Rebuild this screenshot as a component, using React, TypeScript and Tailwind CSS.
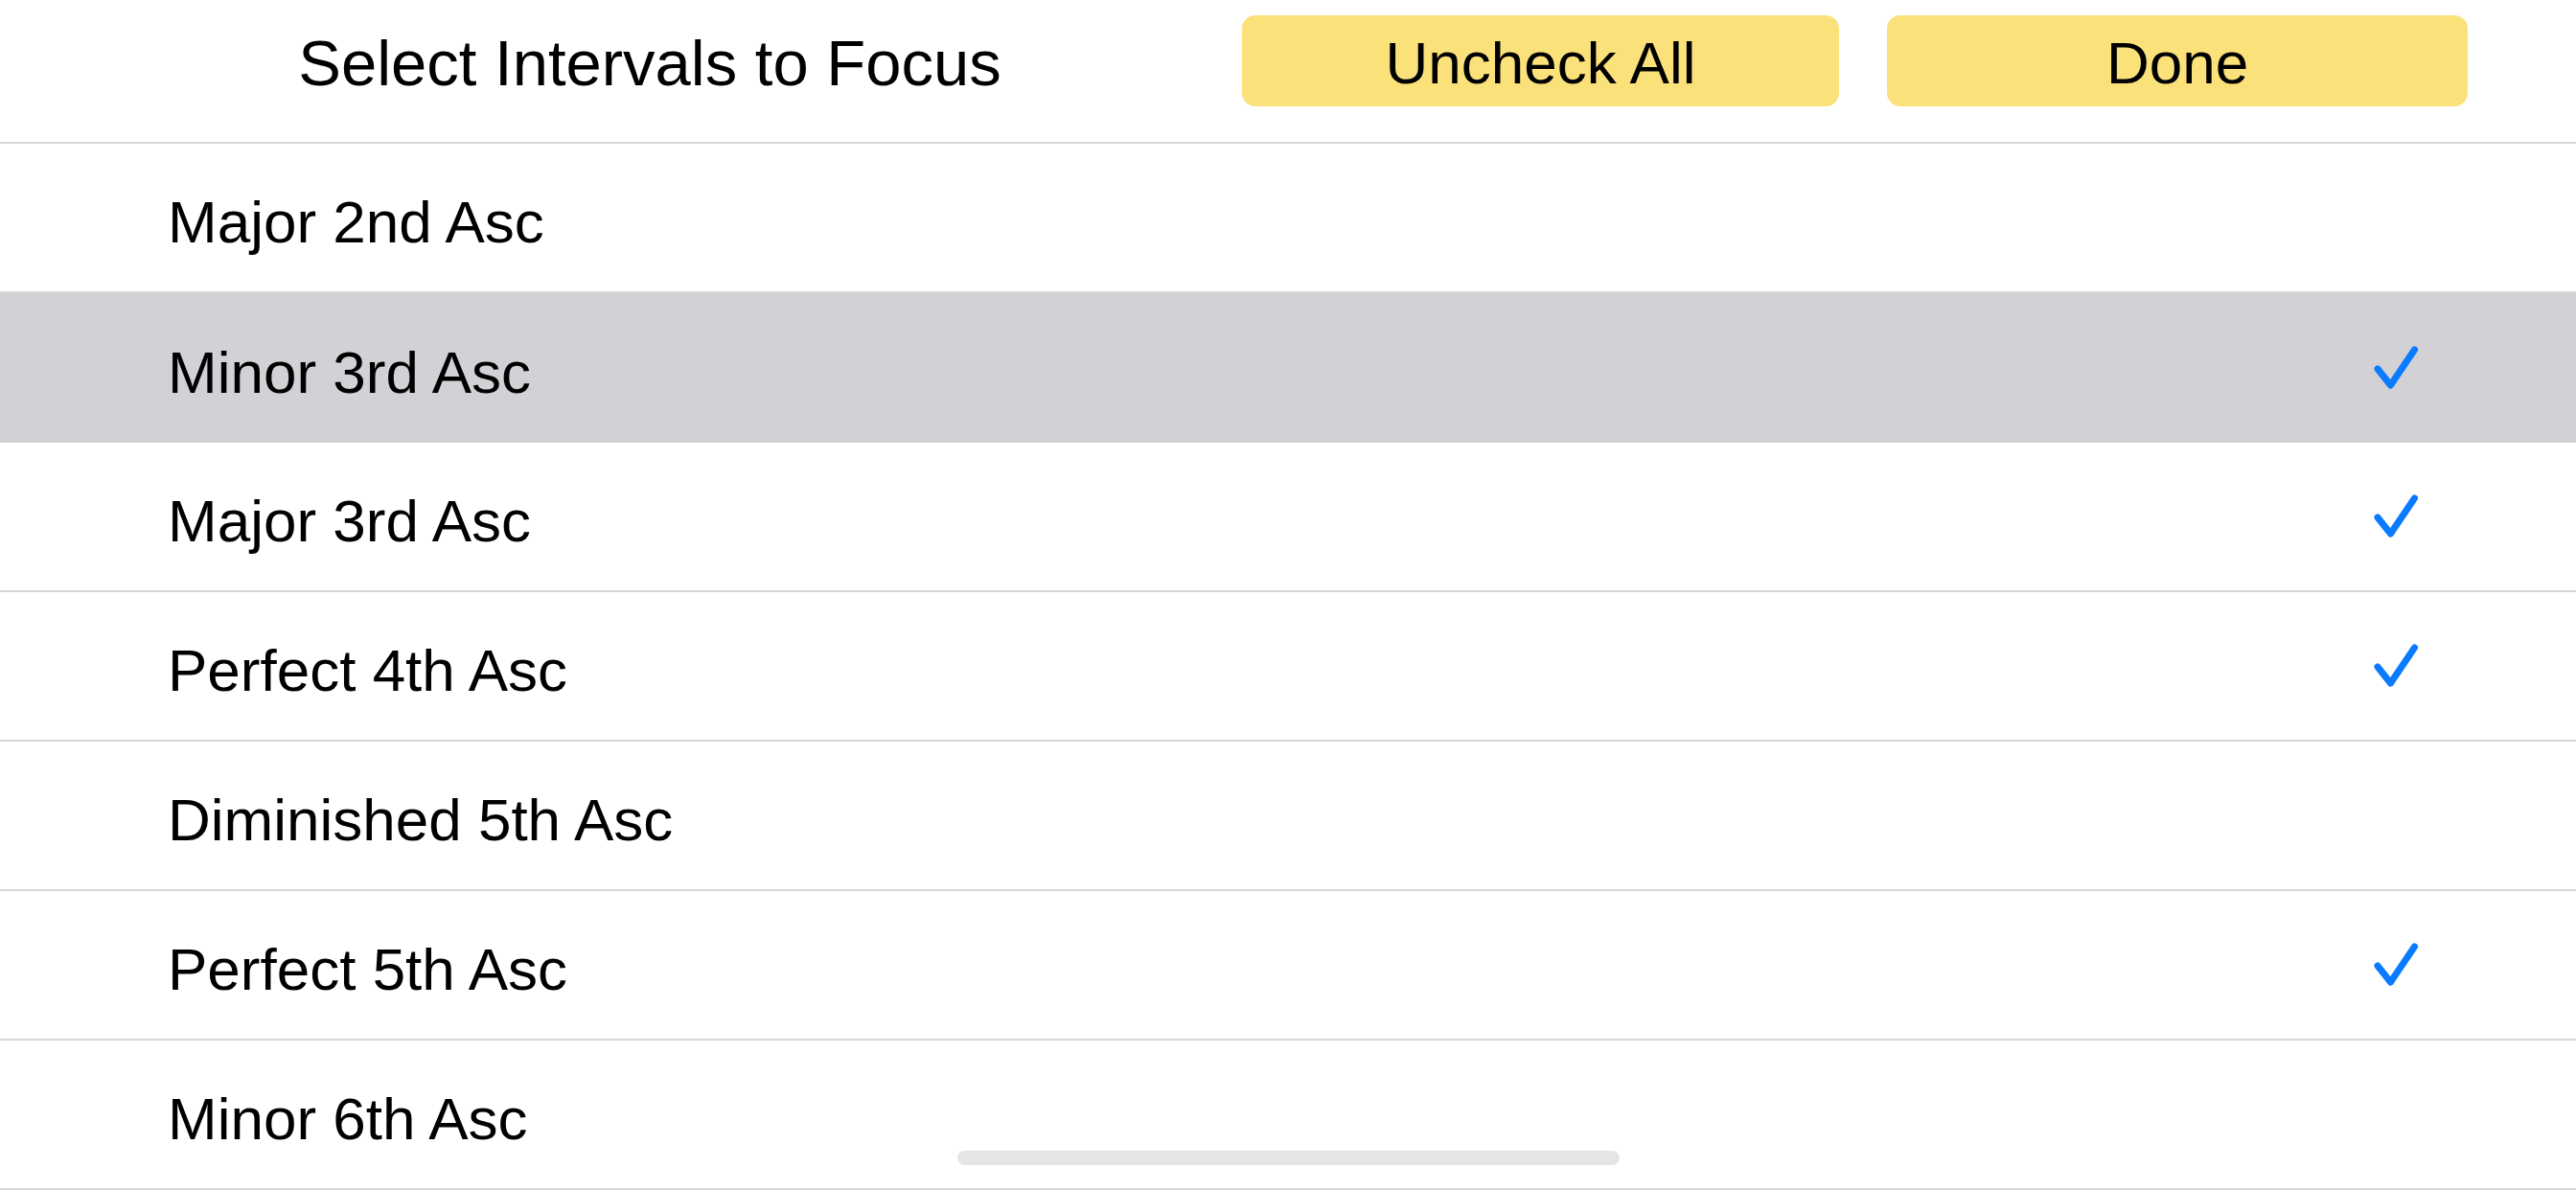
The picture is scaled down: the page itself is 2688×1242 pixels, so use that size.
import React from "react";

const rows: { label: string; checked: boolean; highlighted?: boolean }[] = [
  { label: "Major 2nd Asc", checked: false },
  { label: "Minor 3rd Asc", checked: true, highlighted: true },
  { label: "Major 3rd Asc", checked: true },
  { label: "Perfect 4th Asc", checked: true },
  { label: "Diminished 5th Asc", checked: false },
  { label: "Perfect 5th Asc", checked: true },
  { label: "Minor 6th Asc", checked: false },
];

function Check() {
  return (
    <svg width="50" height="50" viewBox="0 0 50 50" fill="none">
      <path
        d="M6 26 L19.5 43 L44.5 6"
        stroke="#0A7AFF"
        strokeWidth="7"
        strokeLinecap="round"
        strokeLinejoin="round"
      />
    </svg>
  );
}

export default function App() {
  return (
    <div
      className="relative w-[2688px] h-[1242px] overflow-hidden bg-white text-black"
      style={{ fontFamily: '"Liberation Sans", Arial, sans-serif' }}
    >
      <header className="h-[150px] border-b-2 border-[#d6d6d8] flex items-start pt-[16px]">
        <div className="w-[1296px] pl-[60px] h-[95px] flex items-center justify-center">
          <span className="text-[67px] leading-none pt-[4px]">Select Intervals to Focus</span>
        </div>
        <div className="flex gap-[50px]">
          <button className="w-[623px] h-[95px] rounded-[14px] bg-[#fbe17a] text-[62px] leading-none flex items-center justify-center pt-[4px]">
            Uncheck All
          </button>
          <button className="w-[606px] h-[95px] rounded-[14px] bg-[#fbe17a] text-[62px] leading-none flex items-center justify-center pt-[4px]">
            Done
          </button>
        </div>
      </header>
      <div className="flex flex-col">
        {rows.map((r) => (
          <div
            key={r.label}
            className={
              "h-[156px] flex items-center pl-[175px] pr-[163px] " +
              (r.highlighted ? "bg-[#d1d1d6]" : "border-b-2 border-[#d6d6d8]")
            }
          >
            <span className="flex-1 text-[62px] leading-none pt-[10px]">{r.label}</span>
            {r.checked && (
              <div className="w-[50px] h-[50px] flex items-center justify-center">
                <Check />
              </div>
            )}
          </div>
        ))}
      </div>
      <div className="absolute left-[999px] top-[1201px] w-[691px] h-[15px] rounded-full bg-[#e5e5e5]" />
    </div>
  );
}
